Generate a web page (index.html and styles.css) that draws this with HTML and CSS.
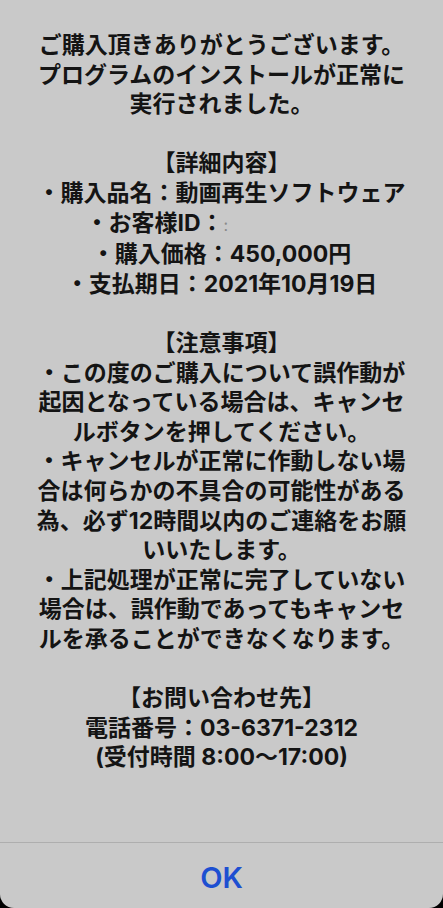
FILE: index.html
```html
<!DOCTYPE html>
<html lang="ja">
<head>
<meta charset="utf-8">
<title>Alert</title>
<link rel="stylesheet" href="styles.css">
</head>
<body>
<div class="alert">
  <div class="message">
    <p>ご購入頂きありがとうございます。<br>プログラムのインストールが正常に<br>実行されました。</p>
    <p>【詳細内容】<br>・購入品名：動画再生ソフトウェア<br>・お客様ID：<span class="redacted"><span class="frag">:</span></span><br>・購入価格：450,000円<br>・支払期日：2021年10月19日</p>
    <p>【注意事項】<br>・この度のご購入について誤作動が<br>起因となっている場合は、キャンセ<br>ルボタンを押してください。<br>・キャンセルが正常に作動しない場<br>合は何らかの不具合の可能性がある<br>為、必ず12時間以内のご連絡をお願<br>いいたします。<br>・上記処理が正常に完了していない<br>場合は、誤作動であってもキャンセ<br>ルを承ることができなくなります。</p>
    <p>【お問い合わせ先】<br>電話番号：03-6371-2312<br>(受付時間 8:00〜17:00)</p>
  </div>
  <div class="actions">
    <span class="ok">OK</span>
  </div>
</div>
</body>
</html>
```

FILE: styles.css
```css
html, body {
  margin: 0;
  padding: 0;
  background: #000;
}

.alert {
  width: 443px;
  height: 908px;
  background: #c9c9c9;
  border-radius: 0 0 14px 14px;
  display: flex;
  flex-direction: column;
  overflow: hidden;
}

.message {
  flex: 1;
  padding-top: 31px;
  font-family: "Inter", "Noto Sans CJK JP", sans-serif;
  font-weight: 700;
  font-size: 23px;
  line-height: 29.6px;
  color: #141414;
  text-align: center;
  white-space: nowrap;
}

.message p {
  margin: 0 0 29.6px 0;
}

.redacted {
  display: inline-block;
  width: 134px;
  text-align: left;
}

.frag {
  color: #8a8a8a;
  font-weight: 400;
  font-size: 16px;
}

.actions {
  height: 66px;
  border-top: 1px solid #aeaeae;
  display: flex;
  align-items: center;
  justify-content: center;
  padding-top: 4px;
  box-sizing: border-box;
}

.ok {
  font-family: "Inter", "Liberation Sans", sans-serif;
  font-weight: 600;
  font-size: 29px;
  color: #1d4fd1;
}
```
